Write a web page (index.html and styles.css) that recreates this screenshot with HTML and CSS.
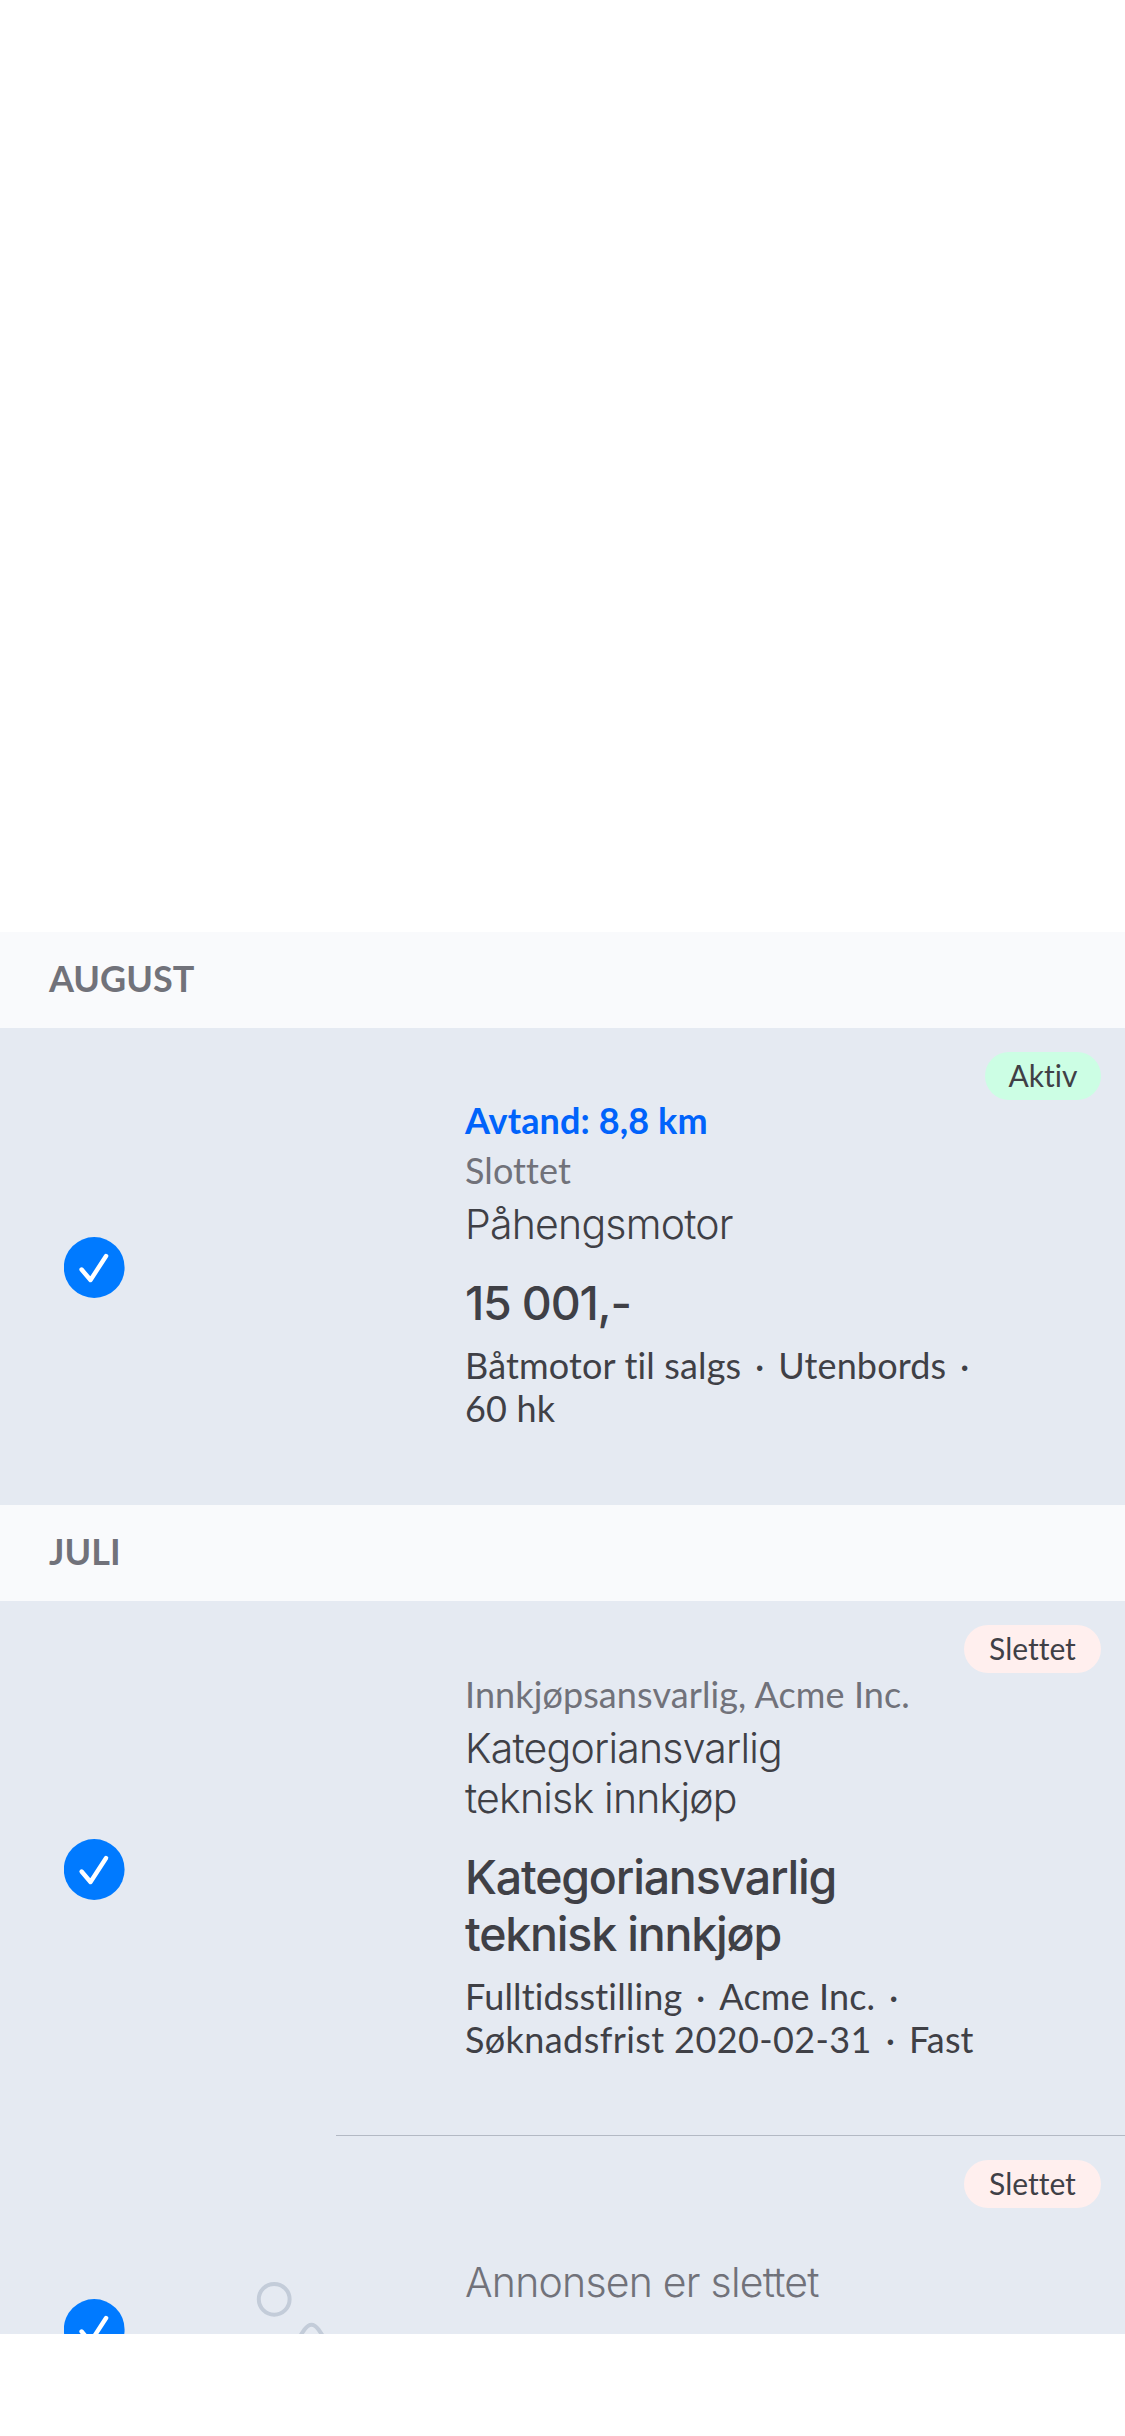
FILE: index.html
```html
<!DOCTYPE html>
<html lang="nb">
<head>
<meta charset="utf-8">
<title>Favoritter</title>
<link rel="stylesheet" href="styles.css">
</head>
<body>
<main class="list">
  <section class="group">
    <h2 class="group-title">AUGUST</h2>
    <article class="row">
      <svg class="check" viewBox="0 0 61 61"><circle cx="30.2" cy="30.5" r="30.4"/><path d="M17.6 32.5 26.5 43 42.1 19"/></svg>
      <div class="thumb"></div>
      <div class="content">
        <p class="distance">Avtand: 8,8 km</p>
        <p class="place">Slottet</p>
        <h3 class="title">Påhengsmotor</h3>
        <p class="price">15 001,-</p>
        <p class="details">Båtmotor til salgs<span class="dot">·</span>Utenbords<span class="dot">·</span><br>60 hk</p>
      </div>
      <span class="badge badge-active">Aktiv</span>
    </article>
  </section>
  <section class="group">
    <h2 class="group-title">JULI</h2>
    <article class="row row-divided">
      <svg class="check" viewBox="0 0 61 61"><circle cx="30.2" cy="30.5" r="30.4"/><path d="M17.6 32.5 26.5 43 42.1 19"/></svg>
      <div class="thumb"></div>
      <div class="content">
        <p class="place">Innkjøpsansvarlig, Acme Inc.</p>
        <h3 class="title">Kategoriansvarlig<br>teknisk innkjøp</h3>
        <p class="price">Kategoriansvarlig<br>teknisk innkjøp</p>
        <p class="details">Fulltidsstilling<span class="dot">·</span>Acme Inc.<span class="dot">·</span><br><span class="deadline">Søknadsfrist 2020-02-31</span><span class="dot">·</span>Fast</p>
      </div>
      <span class="badge badge-deleted">Slettet</span>
    </article>
    <article class="row row-deleted">
      <svg class="check" viewBox="0 0 61 61"><circle cx="30.2" cy="30.5" r="30.4"/><path d="M17.6 32.5 26.5 43 42.1 19"/></svg>
      <div class="thumb">
        <svg class="placeholder" viewBox="0 0 240 240"><circle cx="85.2" cy="90.3" r="15.4"/><path d="M92 155 115.5 120.5Q122.5 111 129.5 120.5L153 155"/></svg>
      </div>
      <div class="content">
        <h3 class="title">Annonsen er slettet</h3>
      </div>
      <span class="badge badge-deleted">Slettet</span>
    </article>
  </section>
</main>
</body>
</html>
```
FILE: styles.css
```css
* { box-sizing: border-box; }

body {
  margin: 0;
  background: #fff;
  color: #3f4046;
  font-family: Lato, sans-serif;
  font-variant-ligatures: none;
}

.list {
  height: 2334px;
  padding-top: 932px;
  overflow: hidden;
}

.group-title {
  height: 96px;
  margin: 0;
  padding-left: 49px;
  background: #f9fafc;
  color: #71727a;
  font-size: 36px;
  font-weight: 700;
  line-height: 93px;
  letter-spacing: 0;
}

.row {
  position: relative;
  display: flex;
  align-items: center;
  height: 477px;
  padding-left: 64px;
  background: #e5eaf2;
}

.row-divided { height: 535px; }

.row-divided::after {
  content: "";
  position: absolute;
  right: 0;
  bottom: 0;
  left: 336px;
  height: 1px;
  background: #b3b9c4;
}

.row-deleted { height: 385px; }

.check {
  flex: none;
  width: 61px;
  height: 61px;
  margin-top: 2px;
}

.check circle { fill: #007aff; }

.check path {
  fill: none;
  stroke: #fff;
  stroke-width: 4.4;
  stroke-linecap: round;
  stroke-linejoin: round;
}

.thumb {
  flex: none;
  width: 240px;
  height: 240px;
  margin: 0 36px 0 64px;
}

.placeholder {
  display: block;
  fill: none;
  stroke: #c3ccd9;
  stroke-width: 4;
}

.content {
  flex: 1;
  align-self: flex-start;
  padding-top: 67px;
}

.row-divided .content { padding-top: 68px; }

.row-deleted .content { padding-top: 121px; }

.distance,
.place,
.title,
.price,
.details { margin: 0; }

.distance {
  color: #0063fb;
  font-size: 36px;
  font-weight: 700;
  line-height: 50px;
  letter-spacing: 0.1px;
}

.place {
  color: #71727a;
  font-size: 36px;
  line-height: 50px;
  letter-spacing: 0.1px;
}

.title {
  margin-top: 4px;
  font-family: Inter, sans-serif;
  font-size: 41px;
  font-weight: 300;
  line-height: 50px;
  letter-spacing: -0.78px;
}

.row-deleted .title {
  margin-top: 0;
  color: #71727a;
}

.price {
  margin-top: 26px;
  font-family: Inter, sans-serif;
  font-size: 46.5px;
  font-weight: 520;
  line-height: 57px;
  letter-spacing: -1.2px;
}

.details {
  margin-top: 12px;
  font-size: 36px;
  line-height: 43px;
  letter-spacing: 0.15px;
}

.deadline { letter-spacing: 0.4px; }

.dot {
  display: inline-block;
  width: 37px;
  text-align: center;
}

.badge {
  position: absolute;
  top: 24px;
  right: 24px;
  height: 48px;
  border-radius: 24px;
  font-size: 30px;
  line-height: 46px;
  text-align: center;
}

.badge-active {
  width: 116px;
  background: #ccfee4;
}

.badge-deleted {
  width: 137px;
  background: #ffefee;
}
```
